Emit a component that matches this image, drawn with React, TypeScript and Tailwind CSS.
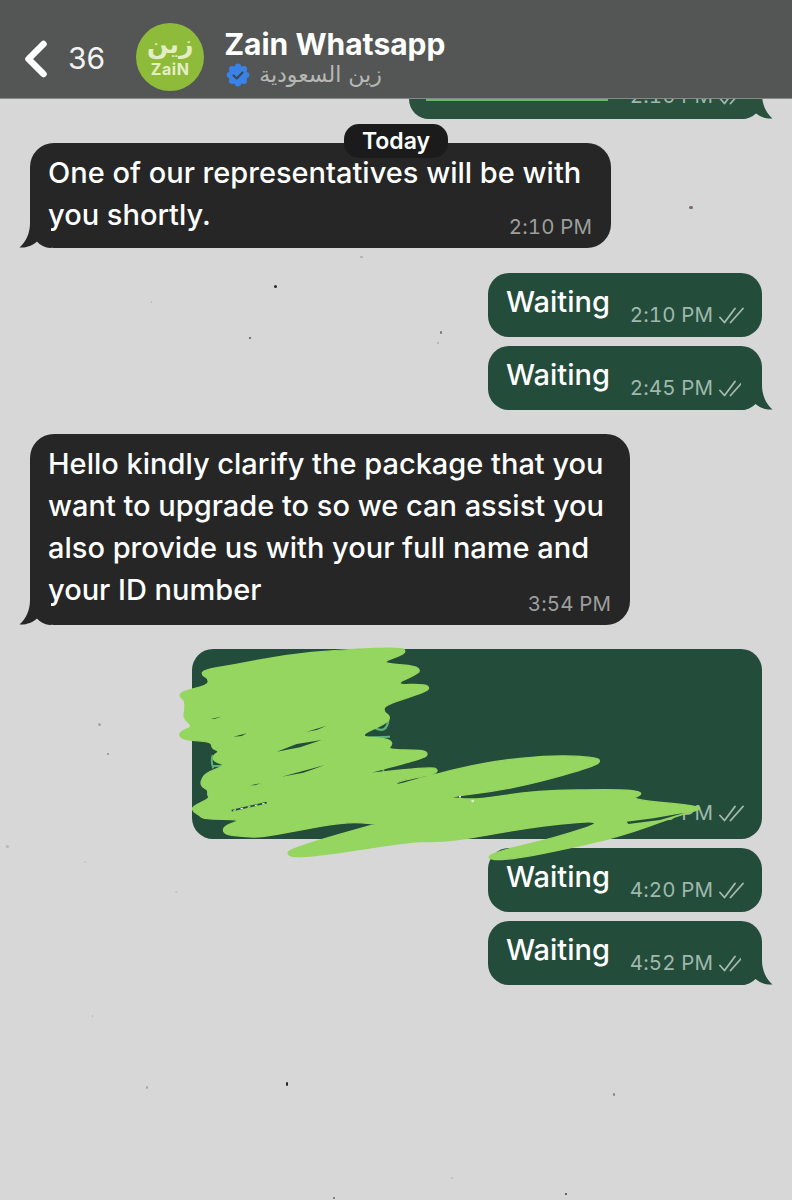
import type { ReactNode } from "react";

const FONT = "font-['Inter','Liberation_Sans',sans-serif]";
const ARABIC = "font-['DejaVu_Sans','Noto_Sans',sans-serif]";

// paper flecks of the chat wallpaper, each at its own place on the canvas
const SPECKS = [
  "left-[286px] top-[1082px] w-[2px] h-[4px] bg-[#2a2a2a]",
  "left-[146px] top-[1086px] w-[2px] h-[3px] bg-[#a8a8a8]",
  "left-[92px] top-[1015px] w-[1px] h-[2px] bg-[#b5b5b5]",
  "left-[613px] top-[1093px] w-[2px] h-[3px] bg-[#858585]",
  "left-[451px] top-[1177px] w-[2px] h-[2px] bg-[#bcbcbc]",
  "left-[565px] top-[1193px] w-[2px] h-[2px] bg-[#3a3a3a]",
  "left-[333px] top-[1197px] w-[2px] h-[2px] bg-[#6b6b6b]",
  "left-[360px] top-[256px] w-[3px] h-[2px] bg-[#b0b0b0]",
  "left-[274px] top-[285px] w-[3px] h-[3px] bg-[#2a2a2a]",
  "left-[151px] top-[301px] w-[1px] h-[2px] bg-[#b5b5b5]",
  "left-[249px] top-[337px] w-[2px] h-[2px] bg-[#555555]",
  "left-[440px] top-[331px] w-[2px] h-[3px] bg-[#777777]",
  "left-[437px] top-[342px] w-[2px] h-[2px] bg-[#b0b0b0]",
  "left-[98px] top-[723px] w-[3px] h-[3px] bg-[#a5a5a5]",
  "left-[107px] top-[753px] w-[2px] h-[2px] bg-[#8f8f8f]",
  "left-[6px] top-[845px] w-[3px] h-[3px] bg-[#b5b5b5]",
  "left-[84px] top-[861px] w-[2px] h-[2px] bg-[#c2c2c2]",
  "left-[175px] top-[891px] w-[3px] h-[2px] bg-[#c6c6c6]",
  "left-[689px] top-[206px] w-[4px] h-[3px] bg-[#7a6a6a]",
];

// outline of the marker scribble, in 3x units from its corner
const BLOB: number[][] = [
  [500, 30], [695, 22], [708, 35], [690, 47], [640, 65], [660, 72], [735, 78], [752, 92], [735, 105], [670, 135],
  [765, 132], [780, 145], [760, 158], [645, 195], [640, 215], [662, 230], [650, 250], [560, 290], [650, 295], [670, 310],
  [650, 330], [760, 330], [775, 342], [760, 355], [560, 408], [600, 400], [790, 380], [805, 392], [790, 402], [680, 425],
  [680, 437], [750, 415], [950, 365], [1150, 345], [1280, 352], [1292, 365], [1270, 378], [1150, 415], [1000, 450], [830, 472],
  [830, 472], [920, 480], [1090, 452], [1350, 448], [1412, 455], [1412, 466], [1380, 478], [1585, 498], [1592, 508], [1530, 525],
  [1350, 590], [1150, 635], [1030, 657], [965, 660], [953, 648], [1000, 630], [1150, 595], [1320, 540], [1120, 555], [900, 595],
  [800, 606], [730, 603], [500, 640], [370, 653], [350, 640], [365, 628], [460, 597], [620, 552], [620, 552], [530, 545],
  [380, 572], [270, 592], [230, 590], [170, 585], [157, 570], [170, 555], [220, 538], [100, 538], [88, 525], [70, 515],
  [65, 500], [120, 475], [112, 465], [115, 450], [95, 440], [92, 425], [105, 400], [170, 375], [130, 365], [130, 345],
  [150, 335], [125, 325], [125, 305], [45, 300], [25, 285], [40, 270], [70, 260], [40, 235], [45, 210], [45, 180],
  [28, 170], [35, 155], [115, 135], [115, 115], [95, 105], [100, 90], [190, 75], [350, 45],
];

function smooth(points: number[][]) {
  const mid = (a: number[], b: number[]) => `${(a[0] + b[0]) / 2} ${(a[1] + b[1]) / 2}`;
  let d = `M${mid(points[points.length - 1], points[0])}`;
  points.forEach((p, i) => {
    d += ` Q${p[0]} ${p[1]} ${mid(p, points[(i + 1) % points.length])}`;
  });
  return d + " Z";
}

function DoubleCheck() {
  return (
    <svg width="25" height="17" viewBox="0 0 25 17" fill="none" stroke="#a3bbae" strokeWidth="1.8" strokeLinecap="round" strokeLinejoin="round" className="ml-[6px] shrink-0">
      <path d="M1 10.5 L5.5 15.5 L16 1.5" />
      <path d="M11.5 15.5 L24 1.5" />
    </svg>
  );
}

function Tail({ side, color }: { side: "left" | "right"; color: string }) {
  const place = side === "left" ? "-left-[11px]" : "-right-[11px] -scale-x-100";
  return (
    <svg width="32" height="30" viewBox="0 0 32 30" className={`absolute bottom-0 ${place}`}>
      <path d="M11 0 L11 5 C11 15 7 24 0.5 29.5 C7 30 14 27.5 18 23.5 C21 27 26 30 32 30 L32 0 Z" fill={color} />
    </svg>
  );
}

function Waiting({ time, tail, className }: { time: string; tail?: boolean; className: string }) {
  return (
    <div className={`relative self-end w-[274px] h-[64px] rounded-[21px] bg-[#244c3b] pl-[18px] pr-[18px] flex justify-between ${className}`}>
      <span className="text-[29px] font-medium leading-[42px] pt-[8px] h-[50px] text-white">Waiting</span>
      <span className="flex items-center h-[24px] mt-[30px] text-[20.5px] tabular-nums tracking-[0.1px] leading-[24px] text-[#9fb8ab]">
        {time}
        <DoubleCheck />
      </span>
      {tail && <Tail side="right" color="#244c3b" />}
    </div>
  );
}

function Incoming({ width, time, pull, className, children }: { width: string; time: string; pull: string; className: string; children: ReactNode }) {
  return (
    <div className={`relative self-start ${width} rounded-[24px] bg-[#252625] pl-[18px] pr-[19px] pt-[9px] pb-[9px] ${className}`}>
      <p className="text-[29px] font-medium leading-[42px] text-white whitespace-nowrap">{children}</p>
      <p className={`${pull} text-right text-[20.5px] tabular-nums tracking-[0.1px] leading-[24px] text-[#9d9e9d]`}>{time}</p>
      <Tail side="left" color="#252625" />
    </div>
  );
}

function Scribble() {
  return (
    <svg width="610" height="230" viewBox="0 0 1830 690" className="absolute -left-[22px] -top-[9px] z-10 overflow-visible">
      <path d="M640 385 L640 402 M565 293 L660 290 M128 345 Q122 365 130 385 M130 378 L170 378" stroke="#5fb07a" strokeWidth="6" fill="none" />
      <path d="M615 264 Q650 282 655 240" stroke="#5fb07a" strokeWidth="7" fill="none" />
      <path d={smooth(BLOB)} fill="#95d660" stroke="#95d660" strokeWidth="4" strokeLinejoin="round" />
      <path d="M320 335 L380 312 L455 300 L390 322 Z M190 290 L230 280 L215 288 Z M410 275 L470 257 L440 270 Z M335 410 L465 375 L400 398 Z M240 436 L272 430 L255 436 Z M122 236 L155 230 L135 236 Z M1370 545 L1450 535 L1545 518 L1470 540 L1375 552 Z" fill="#244c3b" />
      <path d="M185 512 L290 488" stroke="#244c3b" strokeWidth="5" />
      <path d="M190 511 L285 490" stroke="#ffffff" strokeWidth="3" strokeDasharray="8 14" />
      <circle cx="870" cy="470" r="3" fill="#ffffff" />
      <circle cx="908" cy="483" r="4" fill="#e8f5dd" />
    </svg>
  );
}

function ZainLogo() {
  return (
    <div className="w-[68px] h-[68px] rounded-full bg-[#8fbb3b] flex flex-col items-center text-[#e4eec6]">
      <span className={`${ARABIC} font-bold text-[25px] leading-[30px] mt-[7px]`}>زين</span>
      <span className="text-[16px] leading-[16px] font-bold tracking-[0.6px] mt-[1px]">ZaiN</span>
    </div>
  );
}

function Verified() {
  return (
    <svg width="24" height="24" viewBox="0 0 24 24">
      <g fill="#3a82e8">
        <circle cx="12" cy="12" r="9.5" />
        <circle cx="12" cy="3.6" r="3" />
        <circle cx="12" cy="20.4" r="3" />
        <circle cx="3.6" cy="12" r="3" />
        <circle cx="20.4" cy="12" r="3" />
        <circle cx="6" cy="6" r="3" />
        <circle cx="18" cy="6" r="3" />
        <circle cx="6" cy="18" r="3" />
        <circle cx="18" cy="18" r="3" />
      </g>
      <path d="M7.5 12.5 L10.8 15.5 L16.5 9.5" fill="none" stroke="#3b4852" strokeWidth="2.2" strokeLinecap="round" strokeLinejoin="round" />
    </svg>
  );
}

export default function App() {
  return (
    <div className={`relative w-[792px] h-[1200px] overflow-hidden bg-[#d7d7d7] ${FONT}`}>
      {SPECKS.map((s) => (
        <span key={s} className={`absolute rounded-full ${s}`} />
      ))}

      <header className="relative z-20 h-[99px] bg-[#535654] border-b border-[#868886] flex items-center pl-[25px] text-white">
        <svg width="22" height="38" viewBox="0 0 22 38" fill="none" stroke="#ffffff" strokeWidth="6.5" strokeLinecap="round" strokeLinejoin="round" className="mt-[20px]">
          <path d="M18.5 4 L3.5 19 L18.5 34" />
        </svg>
        <span className="ml-[21px] text-[30px] leading-none mt-[18px] text-[#f2f2f2]">36</span>
        <div className="ml-[31px] mt-[16px]">
          <ZainLogo />
        </div>
        <div className="ml-[20px] flex flex-col mt-[17px]">
          <span className="text-[30px] leading-[34px] font-bold">Zain Whatsapp</span>
          <span className="flex items-center h-[28px] ml-[2px] gap-[9px]">
            <Verified />
            <span dir="rtl" className={`${ARABIC} text-[22px] leading-[28px] text-[#b7b8b6]`}>زين السعودية</span>
          </span>
        </div>
      </header>

      <main className="relative flex flex-col px-[30px]">
        <div className="relative self-end w-[353px] h-[20px] rounded-b-[21px] bg-[#29513e] flex justify-between pl-[17px] pr-[18px]">
          <span className="block w-[182px] h-[2px] bg-[#66b96a]" />
          <span className="flex items-center h-[24px] -mt-[15px] text-[20.5px] tabular-nums tracking-[0.1px] leading-[24px] text-[#9fb8ab]">
            2:10 PM
            <DoubleCheck />
          </span>
          <Tail side="right" color="#29513e" />
        </div>

        <div className="relative z-10 self-center mt-[5px] -mb-[15px] w-[104px] h-[34px] rounded-[15px] bg-[#1b1b1b] flex items-center justify-center text-[23px] font-semibold text-white">
          Today
        </div>

        <Incoming width="w-[581px]" time="2:10 PM" pull="-mt-[21px]" className="">
          One of our representatives will be with
          <br />
          you shortly.
        </Incoming>

        <Waiting time="2:10 PM" className="mt-[25px]" />
        <Waiting time="2:45 PM" tail className="mt-[9px]" />

        <Incoming width="w-[600px]" time="3:54 PM" pull="-mt-[19px]" className="mt-[24px]">
          Hello kindly clarify the package that you
          <br />
          want to upgrade to so we can assist you
          <br />
          also provide us with your full name and
          <br />
          your ID number
        </Incoming>

        <div className="relative self-end mt-[24px] w-[570px] h-[190px] rounded-[21px] bg-[#244c3b]">
          <span className="absolute right-[18px] bottom-[14px] flex items-center h-[24px] text-[20.5px] tabular-nums tracking-[0.1px] leading-[24px] text-[#9fb8ab]">
            3:58 PM
            <DoubleCheck />
          </span>
          <Scribble />
        </div>

        <Waiting time="4:20 PM" className="mt-[9px]" />
        <Waiting time="4:52 PM" tail className="mt-[9px]" />
      </main>
    </div>
  );
}
